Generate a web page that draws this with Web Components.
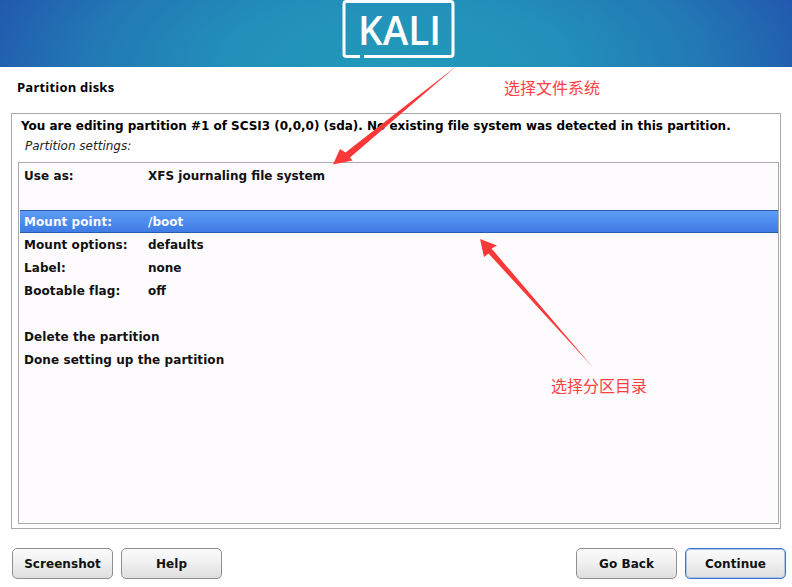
<!DOCTYPE html>
<html lang="en">
<head>
<meta charset="UTF-8">
<title>Partition disks</title>
<style>
  html, body { margin: 0; padding: 0; background: #fff; }
  body { width: 792px; height: 587px; overflow: hidden; font-family: "DejaVu Sans", sans-serif; }
</style>
</head>
<body>

<script>
  function define(name, css, html) {
    class el extends HTMLElement {
      connectedCallback() {
        if (this.shadowRoot) return;
        let root = this.attachShadow({mode: 'open'});
        root.innerHTML = `<style>${css}</style>${typeof html === 'function' ? html(this) : html}`;
      }
    }
    customElements.define(name, el);
  }

  define('kali-banner', `
    :host { display: flex; justify-content: center; height: 67px; flex: none;
      background: radial-gradient(ellipse 430px 190px at 50% 100%, #229ab9 0%, #2290ba 38%, #2278b4 72%, #2257ae 100%); }
    svg { display: block; }
    text { font-family: "Open Sans", sans-serif; font-weight: 600; font-size: 39px; fill: #fff; }
  `, `
    <svg width="120" height="62" viewBox="0 0 120 62">
      <path d="M24 56.500H10.500a2.500 2.500 0 0 1-2.500-2.500V4a2.500 2.500 0 0 1 2.500-2.500h104a2.500 2.500 0 0 1 2.500 2.500v50a2.500 2.500 0 0 1-2.500 2.500H28" fill="none" stroke="#fff" stroke-width="3"/>
      <text x="22" y="45" textLength="83" lengthAdjust="spacingAndGlyphs">KALI</text>
    </svg>
  `);

  define('kali-title', `
    :host { display: block; height: 46px; flex: none; box-sizing: border-box; padding: 12px 0 0 17px;
      font: 700 13px/16px "Open Sans", sans-serif; letter-spacing: .2px; color: #000; }
  `, `<slot></slot>`);

  define('kali-frame', `
    :host { display: flex; flex-direction: column; height: 416px; flex: none; box-sizing: border-box;
      margin: 0 11px; border: 1px solid #aaa; padding: 4px 1px 4px 6px; }
    .msg { font: bold 12px/17px "DejaVu Sans", sans-serif; letter-spacing: -.01px; padding-left: 3px; height: 17px; flex: none; white-space: nowrap; }
    .sub { font: italic 12px/17px "DejaVu Sans", sans-serif; color: #222; padding: 3px 0 0 7px; height: 24px; flex: none; }
  `, (h) => `
    <div class="msg">${h.getAttribute('message')}</div>
    <div class="sub">${h.getAttribute('sub')}</div>
    <slot></slot>
  `);

  define('kali-list', `
    :host { display: block; flex: 1; box-sizing: border-box; border: 1px solid #aaa; background: #fefbff; padding: 1px 0 0 1px; }
  `, `<slot></slot>`);

  define('kali-row', `
    :host { display: grid; grid-template-columns: 124px 1fr; align-items: center; height: 23px; box-sizing: border-box;
      padding-left: 4px; font: bold 12px/1 "DejaVu Sans", sans-serif; color: #111; white-space: nowrap; }
    :host([selected]) { color: #f8faff; background: linear-gradient(#5c9cf6, #3f7be4); border-top: 1px solid #2a5ca8; border-bottom: 1px solid #2a5ca8; }
    .label { letter-spacing: .07px; }
  `, (h) => `<span class="label">${h.getAttribute('label') || ''}</span><span>${h.getAttribute('value') || ''}</span>`);

  define('kali-buttons', `
    :host { display: flex; justify-content: space-between; flex: none; padding: 19px 6px 0 12px; }
    div { display: flex; gap: 8px; }
  `, `<div><slot name="left"></slot></div><div><slot name="right"></slot></div>`);

  define('kali-button', `
    :host { display: flex; align-items: center; justify-content: center; width: 101px; height: 31px; box-sizing: border-box;
      border: 1px solid #8f8f8f; border-radius: 5px; background: linear-gradient(#fbfbfb, #f1f1f1 45%, #dedede);
      font: bold 12px/1 "DejaVu Sans", sans-serif; letter-spacing: .05px; color: #111; }
    :host([focused]) { border-color: #3f76c8; box-shadow: inset 0 0 0 1px #a9c6ee; }
  `, `<slot></slot>`);

  define('kali-note', `
    :host { position: absolute; font: 16px/20px "Noto Sans CJK SC", "Liberation Sans", sans-serif; color: #ff4040; white-space: nowrap; }
  `, `<slot></slot>`);

  define('kali-arrows', `
    :host { position: absolute; left: 0; top: 0; width: 792px; height: 587px; pointer-events: none; }
    svg { display: block; }
    polygon { fill: #fb3838; }
  `, `
    <svg width="792" height="587" viewBox="0 0 792 587">
      <polygon points="333,164.500 340,149 345.500,152.500 456.500,66 350,157.500 352.500,160.500"/>
      <polygon points="480,239 497,245.500 491.500,248.500 593,367.500 488.500,253.500 484,257"/>
    </svg>
  `);
</script>

<kali-banner></kali-banner>
<kali-title>Partition disks</kali-title>
<kali-frame message="You are editing partition #1 of SCSI3 (0,0,0) (sda). No existing file system was detected in this partition." sub="Partition settings:">
  <kali-list>
    <kali-row label="Use as:" value="XFS journaling file system"></kali-row>
    <kali-row></kali-row>
    <kali-row selected label="Mount point:" value="/boot"></kali-row>
    <kali-row label="Mount options:" value="defaults"></kali-row>
    <kali-row label="Label:" value="none"></kali-row>
    <kali-row label="Bootable flag:" value="off"></kali-row>
    <kali-row></kali-row>
    <kali-row label="Delete the partition"></kali-row>
    <kali-row label="Done setting up the partition"></kali-row>
  </kali-list>
</kali-frame>
<kali-buttons>
  <kali-button slot="left">Screenshot</kali-button>
  <kali-button slot="left">Help</kali-button>
  <kali-button slot="right">Go Back</kali-button>
  <kali-button slot="right" focused>Continue</kali-button>
</kali-buttons>
<kali-arrows></kali-arrows>
<kali-note style="left:504px;top:77px">选择文件系统</kali-note>
<kali-note style="left:551px;top:375px">选择分区目录</kali-note>

</body>
</html>
